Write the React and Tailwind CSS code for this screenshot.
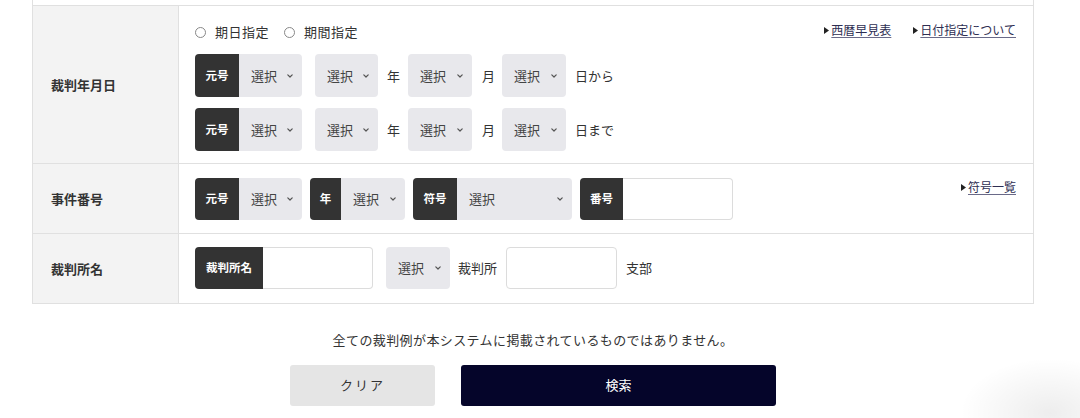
import React from 'react';

const font = { fontFamily: '"Noto Sans CJK JP", "Noto Sans", sans-serif' };

function Chevron() {
  return (
    <svg width="8" height="6" viewBox="0 0 8 6" className="shrink-0">
      <path d="M1.8 1.8 L4 4 L6.2 1.8" fill="none" stroke="#555" strokeWidth="1.2" strokeLinecap="round" strokeLinejoin="round" />
    </svg>
  );
}

function Select({ w, rounded = 'rounded-[4px]' }) {
  return (
    <div className={`${w} h-full bg-[#e8e8ec] ${rounded} flex items-center pl-[12px] pr-[8px] text-[13px] text-[#444]`}>
      <span>選択</span>
      <span className="ml-auto">
        <Chevron />
      </span>
    </div>
  );
}

function Tag({ w, children }) {
  return (
    <div className={`${w} h-full bg-[#333333] text-white text-[11.5px] font-semibold flex items-center justify-center`}>
      {children}
    </div>
  );
}

function TagSelect({ tagW, selW, label }) {
  return (
    <div className="flex h-full rounded-[4px] overflow-hidden">
      <Tag w={tagW}>{label}</Tag>
      <Select w={selW} rounded="rounded-none" />
    </div>
  );
}

function TagInput({ tagW, inputW, label }) {
  return (
    <div className="flex h-full">
      <div className="rounded-l-[4px] overflow-hidden h-full">
        <Tag w={tagW}>{label}</Tag>
      </div>
      <div className={`${inputW} h-full bg-white border border-[#dcdcdc] border-l-0 rounded-r-[4px]`} />
    </div>
  );
}

function Radio({ label }) {
  return (
    <label className="flex items-center gap-[9px] text-[13px] tracking-[0.5px] text-[#333]">
      <span className="w-[11px] h-[11px] rounded-full border border-[#888] bg-white" />
      {label}
    </label>
  );
}

function LinkItem({ children }) {
  return (
    <a className="flex items-center gap-[2px] text-[12px] text-[#2e2e52] underline underline-offset-2 decoration-[#6a6a88]">
      <svg width="5" height="7" viewBox="0 0 5 7" className="shrink-0">
        <path d="M0 0 L5 3.5 L0 7 Z" fill="#222" />
      </svg>
      {children}
    </a>
  );
}

function DateRow({ suffix }) {
  return (
    <div className="flex items-center h-[43px] text-[13px] text-[#333]">
      <TagSelect tagW="w-[44px]" selW="w-[63px]" label="元号" />
      <div className="ml-[13px] h-full">
        <Select w="w-[63px]" />
      </div>
      <span className="ml-[9px]">年</span>
      <div className="ml-[8px] h-full">
        <Select w="w-[64px]" />
      </div>
      <span className="ml-[10px]">月</span>
      <div className="ml-[7px] h-full">
        <Select w="w-[64px]" />
      </div>
      <span className="ml-[9px]">{suffix}</span>
    </div>
  );
}

export default function App() {
  return (
    <div className="relative w-[1080px] h-[418px] bg-white overflow-hidden" style={font}>
      <div className="ml-[32px] w-[1002px]">
        <div className="border border-t-0 border-[#e0e0e0]">
          <div className="h-[6px] border-b border-[#e0e0e0]" />

          {/* 裁判年月日 */}
          <div className="flex border-b border-[#e0e0e0]">
            <div className="w-[146px] shrink-0 bg-[#f3f3f3] border-r border-[#e0e0e0] flex items-center pl-[18px] text-[13px] font-bold text-[#333]">
              裁判年月日
            </div>
            <div className="flex-1 pl-[16px] pr-[17px] pt-[16px] pb-[12px]">
              <div className="flex items-center h-[20px]">
                <div className="flex items-center gap-[15px]">
                  <Radio label="期日指定" />
                  <Radio label="期間指定" />
                </div>
                <div className="ml-auto flex items-center gap-[22px] -mt-[4px]">
                  <LinkItem>西暦早見表</LinkItem>
                  <LinkItem>日付指定について</LinkItem>
                </div>
              </div>
              <div className="mt-[12px] flex flex-col gap-[11px]">
                <DateRow suffix="日から" />
                <DateRow suffix="日まで" />
              </div>
            </div>
          </div>

          {/* 事件番号 */}
          <div className="flex border-b border-[#e0e0e0] h-[70px]">
            <div className="w-[146px] shrink-0 bg-[#f3f3f3] border-r border-[#e0e0e0] flex items-center pl-[18px] text-[13px] font-bold text-[#333]">
              事件番号
            </div>
            <div className="flex-1 pl-[16px] pr-[17px] pt-[14px] flex items-start">
              <div className="flex items-center gap-[8px] h-[42px]">
                <TagSelect tagW="w-[44px]" selW="w-[63px]" label="元号" />
                <TagSelect tagW="w-[31px]" selW="w-[64px]" label="年" />
                <TagSelect tagW="w-[44px]" selW="w-[115px]" label="符号" />
                <TagInput tagW="w-[43px]" inputW="w-[110px]" label="番号" />
              </div>
              <div className="ml-auto">
                <LinkItem>符号一覧</LinkItem>
              </div>
            </div>
          </div>

          {/* 裁判所名 */}
          <div className="flex h-[69px]">
            <div className="w-[146px] shrink-0 bg-[#f3f3f3] border-r border-[#e0e0e0] flex items-center pl-[18px] text-[13px] font-bold text-[#333]">
              裁判所名
            </div>
            <div className="flex-1 pl-[16px] pt-[13px]">
              <div className="flex items-center h-[42px] text-[13px] text-[#333]">
                <TagInput tagW="w-[68px]" inputW="w-[110px]" label="裁判所名" />
                <div className="ml-[13px] h-full">
                  <Select w="w-[64px]" />
                </div>
                <span className="ml-[8px]">裁判所</span>
                <div className="ml-[9px] w-[111px] h-full bg-white border border-[#dcdcdc] rounded-[4px]" />
                <span className="ml-[9px]">支部</span>
              </div>
            </div>
          </div>
        </div>

        <div className="flex flex-col items-center">
          <p className="mt-[26px] text-[13px] tracking-[0.4px] text-[#333]">
            全ての裁判例が本システムに掲載されているものではありません。
          </p>
          <div className="mt-[15px] flex gap-[26px]">
            <button className="w-[145px] h-[41px] rounded-[3px] bg-[#e5e5e5] text-[13px] tracking-[2px] text-[#333]">
              クリア
            </button>
            <button className="w-[315px] h-[41px] rounded-[3px] bg-[#05052a] text-[13px] text-white">
              検索
            </button>
          </div>
        </div>
      </div>

      <div className="absolute right-[-60px] bottom-[-50px] w-[180px] h-[110px] rounded-full bg-[radial-gradient(closest-side,rgba(0,0,0,0.07),rgba(0,0,0,0))]" />
    </div>
  );
}
